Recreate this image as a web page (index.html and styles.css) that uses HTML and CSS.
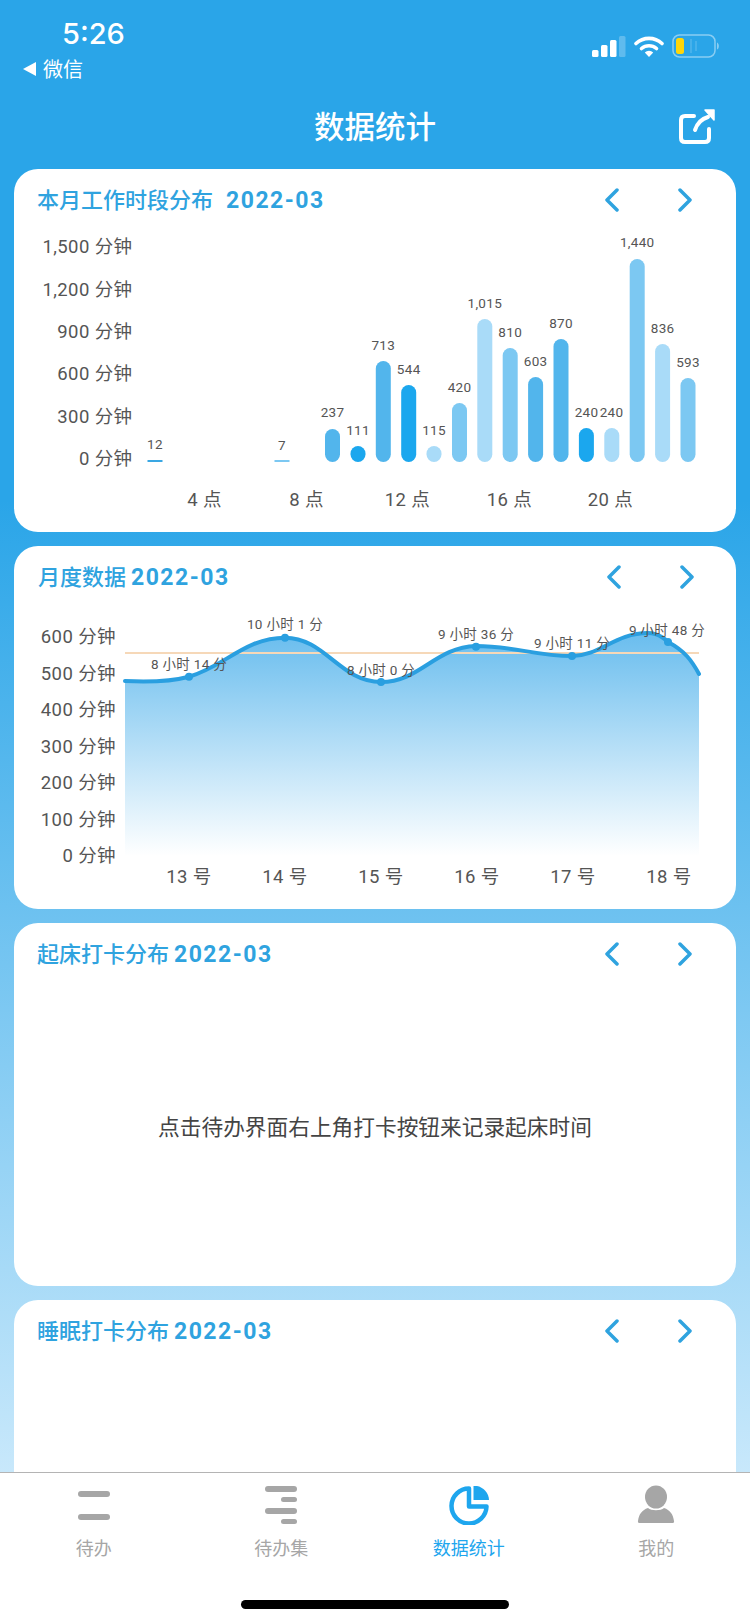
FILE: index.html
```html
<!DOCTYPE html>
<html lang="zh-CN">
<head>
    <meta charset="UTF-8">
    <meta name="viewport" content="width=device-width, initial-scale=1.0">
    <title>数据统计</title>
    <link rel="stylesheet" href="styles.css">
</head>
<body>

<div class="pagina">
    <div class="status-bar">
        <div class="status-esquerda">
            <div class="hora">5:26</div>
            <div class="voltar"><span class="triangulo"></span>微信</div>
        </div>
        <div class="status-direita">
            <svg width="34" height="21" viewBox="0 0 34 21">
                <rect x="0" y="14" width="6.500" height="7" rx="1.500" fill="#fff"/>
                <rect x="9" y="9" width="6.500" height="12" rx="1.500" fill="#fff"/>
                <rect x="18" y="4" width="6.500" height="17" rx="1.500" fill="#fff"/>
                <rect x="27" y="0" width="6.500" height="21" rx="1.500" fill="#fff" opacity="0.25"/>
            </svg>
            <svg width="30" height="21" viewBox="0 0 30 21">
                <path d="M2 7.500 A19 19 0 0 1 28 7.500" fill="none" stroke="#fff" stroke-width="3.600" stroke-linecap="round"/>
                <path d="M7.500 12.500 A11.500 11.500 0 0 1 22.500 12.500" fill="none" stroke="#fff" stroke-width="3.600" stroke-linecap="round"/>
                <path d="M10.800 16.500 A6 6 0 0 1 19.200 16.500 L15 21 Z" fill="#fff"/>
            </svg>
            <svg width="48" height="24" viewBox="0 0 48 24">
                <rect x="1" y="1" width="42" height="22" rx="6.500" fill="none" stroke="#fff" stroke-opacity="0.45" stroke-width="1.500"/>
                <rect x="4" y="4" width="8" height="16" rx="2.500" fill="#ffd60a"/>
                <path d="M19 5 V19 M24 7 V17" stroke="#fff" stroke-opacity="0.18" stroke-width="1.500"/>
                <path d="M45 8.500 C47.500 9.500 47.500 14.500 45 15.500 Z" fill="#fff" fill-opacity="0.45"/>
            </svg>
        </div>
    </div>

    <div class="cabecalho">
        <h1>数据统计</h1>
        <svg class="icone-partilha" width="37" height="36" viewBox="0 0 37 36">
            <path d="M15 8 H6 Q2 8 2 12 V30 Q2 34 6 34 H26 Q30 34 30 30 V21" fill="none" stroke="#fff" stroke-width="4" stroke-linecap="round"/>
            <path d="M16 22 C18 16 22 11 29 9" fill="none" stroke="#fff" stroke-width="4" stroke-linecap="round"/>
            <path d="M26 2 H35 V12 Z" fill="#fff" stroke="#fff" stroke-width="1.500" stroke-linejoin="round"/>
        </svg>
    </div>

    <div class="lista-cartoes">
        <!-- Horas de trabalho -->
        <section class="cartao">
            <div class="cartao-topo">
                <h3>本月工作时段分布<span class="data data-larga">2022-03</span></h3>
                <div class="setas">
                    <svg width="16" height="24" viewBox="0 0 16 24"><path d="M13 2 L3 12 L13 22" class="seta"/></svg>
                    <svg width="16" height="24" viewBox="0 0 16 24"><path d="M3 2 L13 12 L3 22" class="seta"/></svg>
                </div>
            </div>
            <svg class="grafico" width="721" height="300" viewBox="-1.500 0 721 300">
                <g class="eixo" text-anchor="end">
                    <text x="117" y="27">1,500 分钟</text>
                    <text x="117" y="70">1,200 分钟</text>
                    <text x="117" y="112">900 分钟</text>
                    <text x="117" y="154">600 分钟</text>
                    <text x="117" y="197">300 分钟</text>
                    <text x="117" y="239">0 分钟</text>
                </g>
                <g class="eixo" text-anchor="middle">
                    <text x="189" y="280">4 点</text>
                    <text x="291" y="280">8 点</text>
                    <text x="392" y="280">12 点</text>
                    <text x="494" y="280">16 点</text>
                    <text x="595" y="280">20 点</text>
                </g>
                <rect class="cor-b" x="132" y="234" width="15" height="2"/>
                <rect class="cor-d" x="259" y="234" width="15" height="2"/>
                <rect class="cor-c" x="309.500" y="203" width="15" height="33" rx="7.500"/>
                <rect class="cor-a" x="335" y="220" width="15" height="16" rx="7.500"/>
                <rect class="cor-c" x="360.300" y="135" width="15" height="101" rx="7.500"/>
                <rect class="cor-a" x="385.700" y="159" width="15" height="77" rx="7.500"/>
                <rect class="cor-e" x="411" y="220" width="15" height="16" rx="7.500"/>
                <rect class="cor-d" x="436.500" y="177" width="15" height="59" rx="7.500"/>
                <rect class="cor-e" x="461.800" y="93" width="15" height="143" rx="7.500"/>
                <rect class="cor-d" x="487.200" y="122" width="15" height="114" rx="7.500"/>
                <rect class="cor-c" x="512.600" y="151" width="15" height="85" rx="7.500"/>
                <rect class="cor-c" x="538" y="113" width="15" height="123" rx="7.500"/>
                <rect class="cor-a" x="563.400" y="202" width="15" height="34" rx="7.500"/>
                <rect class="cor-e" x="588.800" y="202" width="15" height="34" rx="7.500"/>
                <rect class="cor-d" x="614.200" y="33" width="15" height="203" rx="7.500"/>
                <rect class="cor-e" x="639.600" y="118" width="15" height="118" rx="7.500"/>
                <rect class="cor-d" x="665" y="152" width="15" height="84" rx="7.500"/>
                <g class="valor" text-anchor="middle">
                    <text x="139.500" y="222.500">12</text>
                    <text x="266.500" y="223.500">7</text>
                    <text x="317" y="191">237</text>
                    <text x="342.500" y="209">111</text>
                    <text x="367.800" y="124">713</text>
                    <text x="393.200" y="147.500">544</text>
                    <text x="418.500" y="209">115</text>
                    <text x="444" y="165.500">420</text>
                    <text x="469.300" y="82">1,015</text>
                    <text x="494.700" y="110.500">810</text>
                    <text x="520.100" y="139.500">603</text>
                    <text x="545.500" y="101.500">870</text>
                    <text x="571" y="191">240</text>
                    <text x="596" y="191">240</text>
                    <text x="621.700" y="20.500">1,440</text>
                    <text x="647.100" y="106.500">836</text>
                    <text x="672.500" y="141">593</text>
                </g>
            </svg>
        </section>

        <!-- Dados mensais -->
        <section class="cartao">
            <div class="cartao-topo">
                <h3 class="titulo-mes">月度数据 <span class="data">2022-03</span></h3>
                <div class="setas setas-mes">
                    <svg width="16" height="24" viewBox="0 0 16 24"><path d="M13 2 L3 12 L13 22" class="seta"/></svg>
                    <svg width="16" height="24" viewBox="0 0 16 24"><path d="M3 2 L13 12 L3 22" class="seta"/></svg>
                </div>
            </div>
            <svg class="grafico" width="721" height="263" viewBox="0 47 721 263">
                <defs>
                    <linearGradient id="preenchimento" x1="0" y1="0" x2="0" y2="1">
                        <stop offset="0" stop-color="#69bdee"/>
                        <stop offset="1" stop-color="#ffffff"/>
                    </linearGradient>
                </defs>
                <path fill="url(#preenchimento)" d="M111 125 C131 126 155 126 175 120.700 C210 111 231 81.700 271 81.700 C311 81.700 326 126 367 126 C406 126 421 91 462 90 C501 90 521 100 558 100 C586 100 601 77 634 77 C646 77 654 86 654 86 C671 95 678 105 685 118 V300 H111 Z"/>
                <line x1="111" y1="97" x2="685" y2="97" class="media"/>
                <path class="curva" d="M111 125 C131 126 155 126 175 120.700 C210 111 231 81.700 271 81.700 C311 81.700 326 126 367 126 C406 126 421 91 462 90 C501 90 521 100 558 100 C586 100 601 77 634 77 C646 77 654 86 654 86 C671 95 678 105 685 118"/>
                <g class="ponto">
                    <circle cx="175" cy="120.700" r="4"/>
                    <circle cx="271" cy="81.700" r="4"/>
                    <circle cx="367" cy="126" r="4"/>
                    <circle cx="462" cy="90.700" r="4"/>
                    <circle cx="558" cy="100" r="4"/>
                    <circle cx="654" cy="86" r="4"/>
                </g>
                <g class="eixo" text-anchor="end">
                    <text x="102" y="87">600 分钟</text>
                    <text x="102" y="124">500 分钟</text>
                    <text x="102" y="160">400 分钟</text>
                    <text x="102" y="197">300 分钟</text>
                    <text x="102" y="233">200 分钟</text>
                    <text x="102" y="270">100 分钟</text>
                    <text x="102" y="306">0 分钟</text>
                </g>
                <g class="valor" text-anchor="middle">
                    <text x="175" y="113">8 小时 14 分</text>
                    <text x="271" y="72.500">10 小时 1 分</text>
                    <text x="367" y="118.500">8 小时 0 分</text>
                    <text x="462" y="83">9 小时 36 分</text>
                    <text x="558" y="91.500">9 小时 11 分</text>
                    <text x="653" y="78.500">9 小时 48 分</text>
                </g>
            </svg>
            <div class="dias">
                <span>13 号</span><span>14 号</span><span>15 号</span><span>16 号</span><span>17 号</span><span>18 号</span>
            </div>
        </section>

        <!-- Despertar -->
        <section class="cartao">
            <div class="cartao-topo">
                <h3>起床打卡分布 <span class="data">2022-03</span></h3>
                <div class="setas">
                    <svg width="16" height="24" viewBox="0 0 16 24"><path d="M13 2 L3 12 L13 22" class="seta"/></svg>
                    <svg width="16" height="24" viewBox="0 0 16 24"><path d="M3 2 L13 12 L3 22" class="seta"/></svg>
                </div>
            </div>
            <p class="vazio">点击待办界面右上角打卡按钮来记录起床时间</p>
        </section>

        <!-- Sono -->
        <section class="cartao">
            <div class="cartao-topo">
                <h3>睡眠打卡分布 <span class="data">2022-03</span></h3>
                <div class="setas">
                    <svg width="16" height="24" viewBox="0 0 16 24"><path d="M13 2 L3 12 L13 22" class="seta"/></svg>
                    <svg width="16" height="24" viewBox="0 0 16 24"><path d="M3 2 L13 12 L3 22" class="seta"/></svg>
                </div>
            </div>
        </section>
    </div>

    <nav class="barra-abas">
        <div class="abas">
            <div class="aba">
                <svg width="40" height="40" viewBox="0 0 40 40">
                    <rect x="4" y="6" width="32" height="6" rx="3" fill="#a6a6a6"/>
                    <rect x="4" y="29" width="32" height="6" rx="3" fill="#a6a6a6"/>
                </svg>
                <span>待办</span>
            </div>
            <div class="aba">
                <svg width="40" height="40" viewBox="0 0 40 40">
                    <rect x="4" y="1" width="32" height="6" rx="3" fill="#a6a6a6"/>
                    <rect x="20" y="12" width="16" height="5" rx="2.500" fill="#a6a6a6"/>
                    <rect x="4" y="23" width="32" height="6" rx="3" fill="#a6a6a6"/>
                    <rect x="20" y="34" width="16" height="5" rx="2.500" fill="#a6a6a6"/>
                </svg>
                <span>待办集</span>
            </div>
            <div class="aba ativa">
                <svg width="40" height="40" viewBox="0 0 40 40">
                    <path d="M20 3.500 A17.500 17.500 0 1 0 37.500 21.500 H20 Z" fill="none" stroke="#1ea6ee" stroke-width="4.500" stroke-linejoin="round"/>
                    <path d="M24.500 1 H28 C34 2 40 8 40 15 H24.500 Z" fill="#1ea6ee"/>
                </svg>
                <span>数据统计</span>
            </div>
            <div class="aba">
                <svg width="40" height="40" viewBox="0 0 40 40">
                    <ellipse cx="20" cy="12" rx="11" ry="11.500" fill="#a6a6a6"/>
                    <path d="M2 36 C3 29 6 25 12 23 C15 26 25 26 28 23 C34 25 37 29 38 36 Q38.500 38 36 38 H4 Q1.500 38 2 36 Z" fill="#a6a6a6"/>
                </svg>
                <span>我的</span>
            </div>
        </div>
        <div class="indicador"></div>
    </nav>
</div>

</body>
</html>
```

FILE: styles.css
```css
* { box-sizing: border-box; }
html, body { margin: 0; padding: 0; }
body { width: 750px; height: 1623px; overflow: hidden; font-family: "Noto Sans CJK SC", "Noto Sans", sans-serif; }
.pagina { width: 750px; height: 1623px; display: flex; flex-direction: column; overflow: hidden; position: relative; background: linear-gradient(to bottom, #2aa5e8 0px, #2aa5e8 500px, #c8e8fb 1472px); }

.status-bar { height: 94px; display: flex; justify-content: space-between; color: #fff; flex-shrink: 0; }
.status-esquerda { padding: 17px 0 0 23px; }
.hora { font-family: Inter, "Liberation Sans", sans-serif; font-size: 29px; font-weight: 500; line-height: 32px; margin-left: 39px; margin-top: 1px; }
.voltar { display: flex; align-items: center; font-size: 20px; line-height: 28px; margin-top: 5px; }
.triangulo { width: 0; height: 0; border-top: 7px solid transparent; border-bottom: 7px solid transparent; border-right: 13px solid #fff; margin-right: 7px; }
.status-direita { display: flex; align-items: center; gap: 8px; padding: 2px 30px 0 0; height: 90px; }

.cabecalho { height: 75px; display: flex; align-items: center; justify-content: center; position: relative; flex-shrink: 0; }
.cabecalho h1 { margin: -14px 0 0; color: #fff; font-size: 30.500px; font-weight: 500; line-height: 40px; }
.icone-partilha { position: absolute; right: 34px; top: 14px; }

.lista-cartoes { display: flex; flex-direction: column; gap: 14px; padding: 0 14px; flex: 1; }
.cartao { background: #fff; border-radius: 24px; height: 363px; flex-shrink: 0; }
.cartao-topo { height: 62px; display: flex; align-items: center; justify-content: space-between; padding: 0 43px 0 23px; }
.cartao-topo h3 { margin: -1px 0 0; color: #2fa3df; font-size: 22px; font-weight: 500; line-height: 30px; white-space: nowrap; }
.titulo-mes { padding-left: 1px; }
.data { font-family: Roboto, "Liberation Sans", sans-serif; font-size: 23px; font-weight: 700; letter-spacing: 1.500px; }
.data-larga { margin-left: 13px; }
.setas { display: flex; gap: 57px; }
.setas-mes { margin-right: -2px; }
.seta { fill: none; stroke: #2fa3df; stroke-width: 3.500; stroke-linecap: round; stroke-linejoin: round; }

.grafico { display: block; margin-top: -5px; }
.eixo text { font-family: Roboto, "Noto Sans CJK SC", sans-serif; font-size: 18.500px; fill: #555; letter-spacing: 0.400px; }
.valor text { font-family: Roboto, "Noto Sans CJK SC", sans-serif; font-size: 13.500px; fill: #555; letter-spacing: 0.300px; }
.cor-a { fill: #1ba7ee; }
.cor-b { fill: #3aa7e3; }
.cor-c { fill: #52b5ec; }
.cor-d { fill: #7cc8f2; }
.cor-e { fill: #a9dbf8; }
.media { stroke: #f6d8b8; stroke-width: 2; }
.curva { fill: none; stroke: #2a9fe0; stroke-width: 4; stroke-linecap: round; }
.ponto circle { fill: #2a9fe0; }
.dias { display: grid; grid-template-columns: repeat(6, 96px); margin: -2px 0 0 127px; }
.dias span { text-align: center; font-family: Roboto, "Noto Sans CJK SC", sans-serif; font-size: 18.500px; line-height: 26px; color: #555; letter-spacing: 0.400px; }

.vazio { margin: 126px 0 0; text-align: center; font-size: 21.700px; line-height: 30px; color: #444; font-weight: 400; }

.barra-abas { position: absolute; left: 0; right: 0; bottom: 0; height: 151px; background: #fff; border-top: 1px solid #b4b4b4; display: flex; flex-direction: column; align-items: center; padding: 12px 0 14px; }
.abas { width: 100%; display: grid; grid-template-columns: repeat(4, 1fr); }
.aba { display: flex; flex-direction: column; align-items: center; color: #a6a6a6; font-size: 18px; }
.aba span { line-height: 26px; margin-top: 9px; }
.aba.ativa { color: #1ea6ee; }
.indicador { margin-top: auto; width: 268px; height: 9px; background: #000; border-radius: 5px; }
```
